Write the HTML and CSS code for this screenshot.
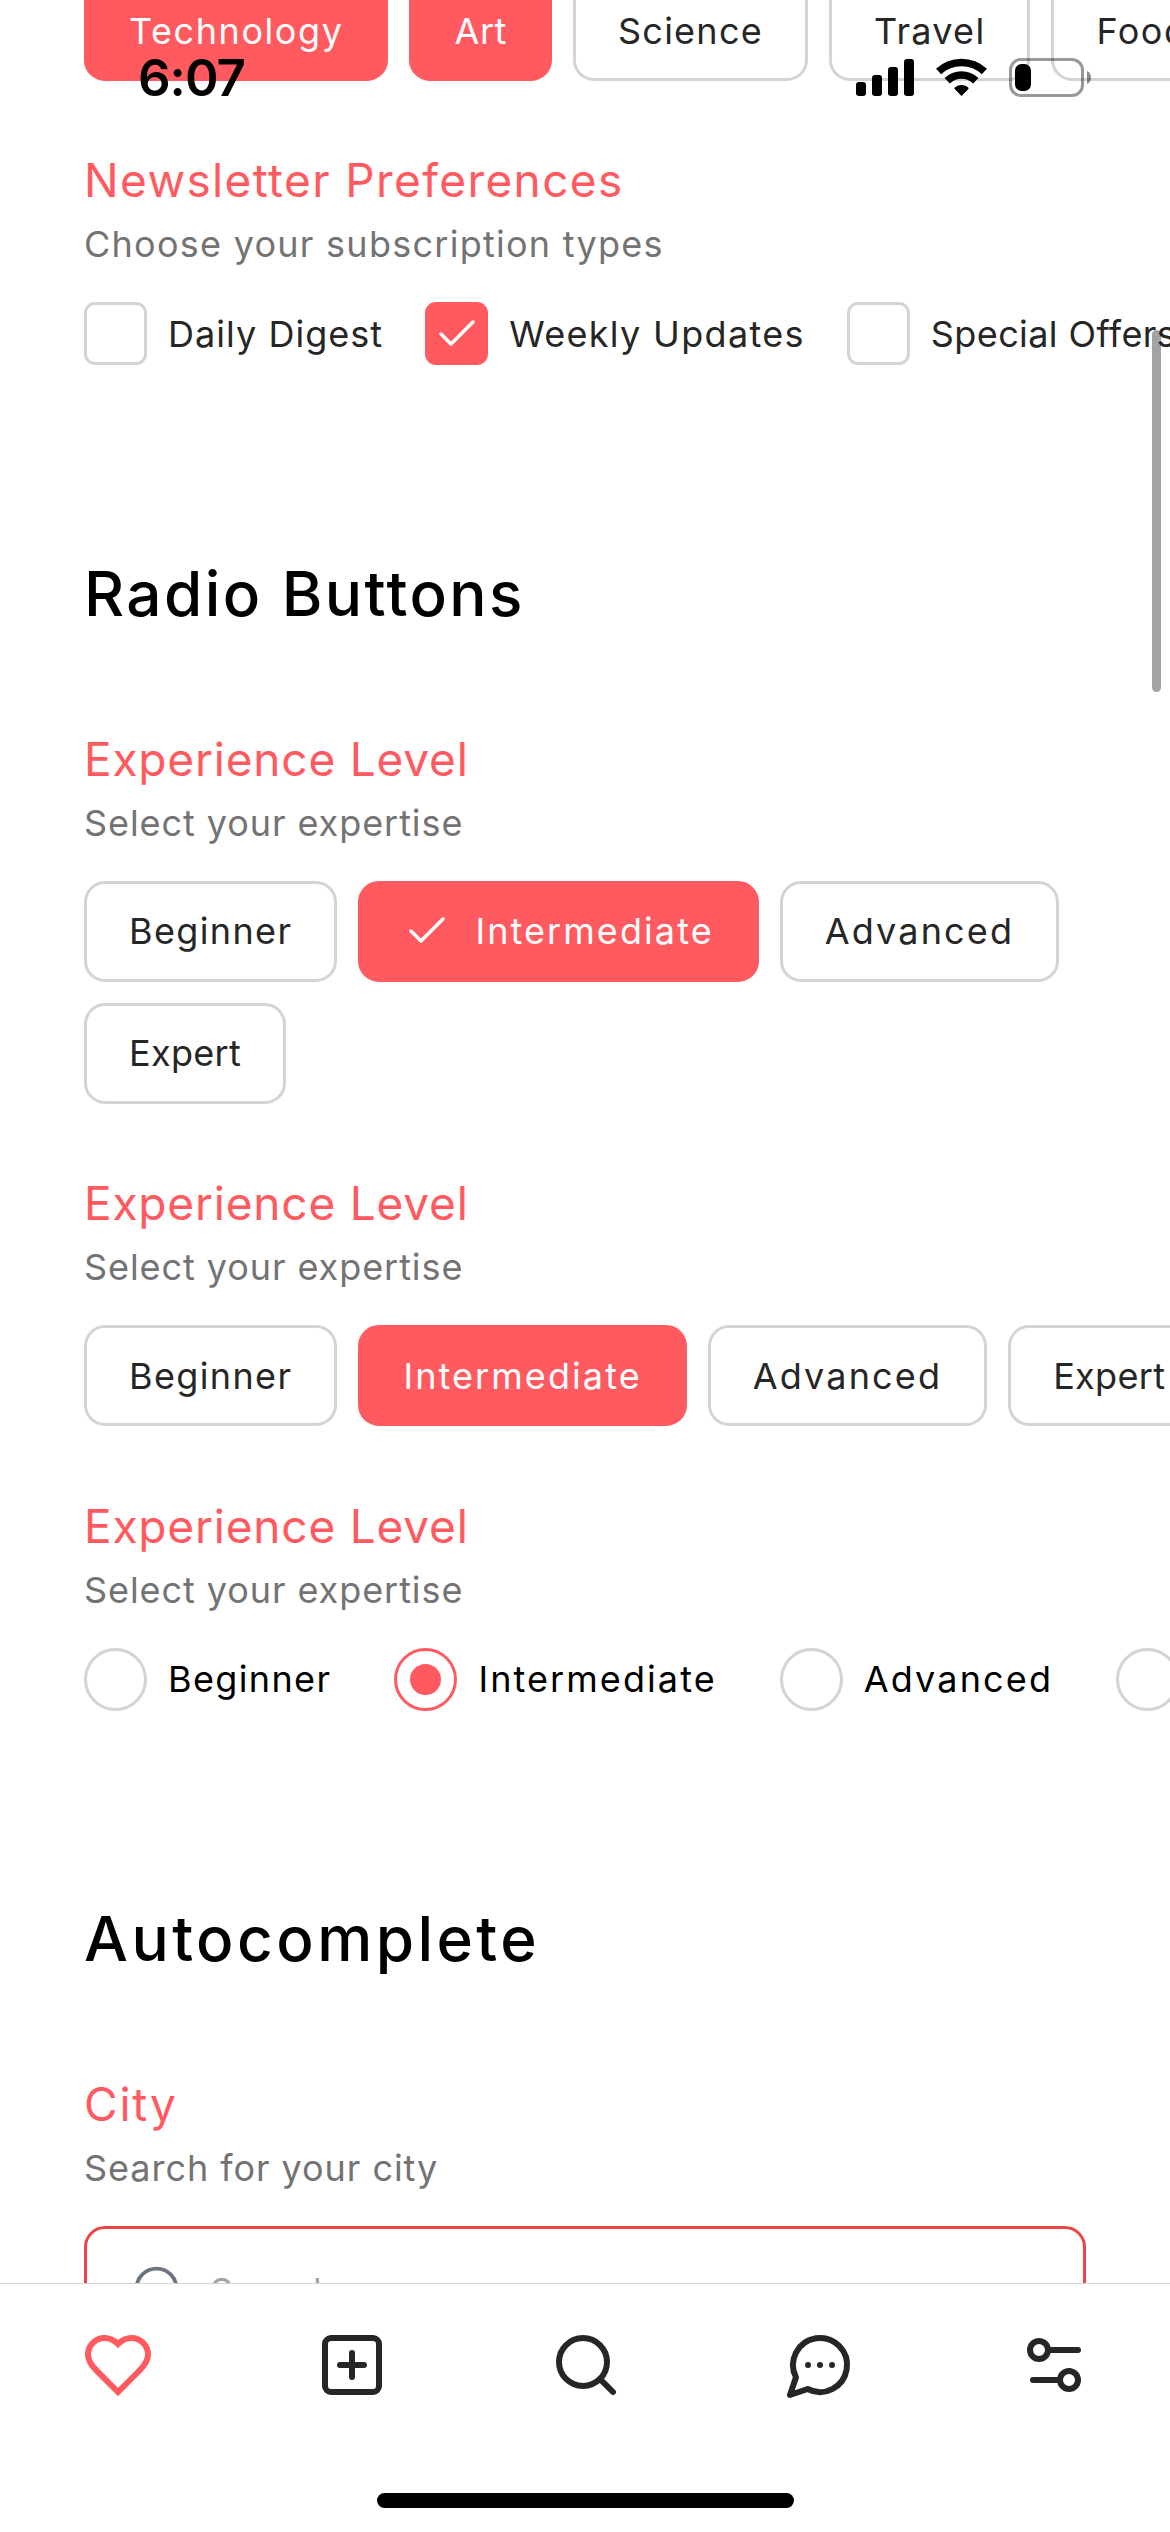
FILE: index.html
```html
<!DOCTYPE html>
<html lang="en">
<head>
<meta charset="utf-8">
<title>Form Components</title>
<link rel="stylesheet" href="styles.css">
</head>
<body>
<div class="screen">
  <main class="content">
    <div class="chips">
      <div class="chip chip-on w-technology">Technology</div>
      <div class="chip chip-on w-art">Art</div>
      <div class="chip w-science">Science</div>
      <div class="chip w-travel">Travel</div>
      <div class="chip w-food">Food</div>
    </div>

    <section class="group">
      <h3 class="title w-newsletter">Newsletter Preferences</h3>
      <p class="hint w-choose">Choose your subscription types</p>
      <div class="checks">
        <div class="check"><span class="box"></span><span class="w-daily">Daily Digest</span></div>
        <div class="check"><span class="box box-on"><svg class="tick" viewBox="0 0 24 24"><path d="M20 6 9 17l-5-5"/></svg></span><span class="w-weekly">Weekly Updates</span></div>
        <div class="check"><span class="box"></span><span class="w-special">Special Offers</span></div>
      </div>
    </section>

    <h2 class="heading w-radio">Radio Buttons</h2>

    <section class="group">
      <h3 class="title w-experience">Experience Level</h3>
      <p class="hint w-select">Select your expertise</p>
      <div class="chips chips-wrap">
        <div class="chip w-beginner">Beginner</div>
        <div class="chip chip-on w-intermediate"><svg class="tick" viewBox="0 0 24 24"><path d="M20 6 9 17l-5-5"/></svg>Intermediate</div>
        <div class="chip w-advanced">Advanced</div>
        <div class="chip w-expert">Expert</div>
      </div>
    </section>

    <section class="group group-next">
      <h3 class="title w-experience">Experience Level</h3>
      <p class="hint w-select">Select your expertise</p>
      <div class="chips">
        <div class="chip w-beginner">Beginner</div>
        <div class="chip chip-on w-intermediate">Intermediate</div>
        <div class="chip w-advanced">Advanced</div>
        <div class="chip w-expert">Expert</div>
      </div>
    </section>

    <section class="group group-next">
      <h3 class="title w-experience">Experience Level</h3>
      <p class="hint w-select">Select your expertise</p>
      <div class="radios">
        <div class="radio"><span class="ring"></span><span class="w-beginner">Beginner</span></div>
        <div class="radio"><span class="ring ring-on"></span><span class="w-intermediate">Intermediate</span></div>
        <div class="radio"><span class="ring"></span><span class="w-advanced">Advanced</span></div>
        <div class="radio"><span class="ring"></span></div>
      </div>
    </section>

    <h2 class="heading w-autocomplete">Autocomplete</h2>

    <section class="group">
      <h3 class="title w-city">City</h3>
      <p class="hint w-search">Search for your city</p>
      <div class="field">
        <svg class="field-icon" viewBox="0 0 24 24"><circle cx="11" cy="11" r="8"/><path d="m21 21-4.3-4.3"/></svg>
        <span class="w-field">Search...</span>
      </div>
    </section>
  </main>

  <nav class="tabs">
    <svg class="tab tab-on" viewBox="0 0 24 24"><path d="M19 14c1.49-1.46 3-3.21 3-5.5A5.5 5.5 0 0 0 16.5 3c-1.76 0-3 .5-4.5 2-1.5-1.5-2.74-2-4.5-2A5.5 5.5 0 0 0 2 8.500c0 2.300 1.500 4.050 3 5.500l7 7Z"/></svg>
    <svg class="tab" viewBox="0 0 24 24"><rect x="3" y="3" width="18" height="18" rx="2"/><path d="M8 12h8M12 8v8"/></svg>
    <svg class="tab" viewBox="0 0 24 24"><circle cx="11" cy="11" r="8"/><path d="m21 21-4.3-4.3"/></svg>
    <svg class="tab" viewBox="0 0 24 24"><path d="M7.9 20A9 9 0 1 0 4 16.1L2 22Z"/><path d="M8 12h.01M12 12h.01M16 12h.01"/></svg>
    <svg class="tab" viewBox="0 0 24 24"><path d="M20 7h-10M14 17H5"/><circle cx="17" cy="17" r="3"/><circle cx="7" cy="7" r="3"/></svg>
  </nav>

  <div class="status">
    <span class="clock">6:07</span>
    <svg class="status-icons" viewBox="0 0 236 40">
      <rect x="0" y="24" width="10" height="14" rx="3"/>
      <rect x="16" y="17" width="10" height="21" rx="3"/>
      <rect x="32" y="9" width="10" height="29" rx="3"/>
      <rect x="48" y="1" width="10" height="37" rx="3"/>
      <g class="wave">
        <path d="M82.6 13.6A33.5 33.5 0 0 1 128.4 13.6"/>
        <path d="M91.2 22.7A20.5 20.5 0 0 1 119.8 22.7"/>
      </g>
      <path d="M105.5 38 L98.6 31 Q98 30 99 29.3 A10.5 10.5 0 0 1 112 29.3 Q113 30 112.4 31Z"/>
      <rect class="cell" x="154.5" y="1.5" width="72" height="36" rx="10.5"/>
      <rect x="159" y="6" width="16" height="27" rx="6.5"/>
      <path class="tip" d="M231 13v13c2.500-1 4-3.500 4-6.500s-1.500-5.500-4-6.500Z"/>
    </svg>
  </div>
  <div class="scrollbar"></div>
  <div class="home-bar"></div>
</div>
</body>
</html>
```
FILE: styles.css
```css
* { box-sizing: border-box; }

body {
  margin: 0;
  background: #fff;
  font-family: "Inter", "Open Sans", sans-serif;
  color: #262626;
}

h2, h3, p { margin: 0; font-weight: 400; }

svg {
  flex: none;
  display: block;
  fill: none;
  stroke: currentColor;
  stroke-width: 2;
  stroke-linecap: round;
  stroke-linejoin: round;
}

.screen {
  position: relative;
  display: flex;
  flex-direction: column;
  width: 1170px;
  height: 2532px;
  overflow: hidden;
}

.content {
  flex: 1;
  min-height: 0;
  overflow: hidden;
  padding: 0 84px;
  font-size: 36px;
  white-space: nowrap;
}

.content > .chips { margin: -20px 0 65px; }

/* Section text */
.heading {
  margin: 183.5px 0 86px;
  font-size: 62px;
  font-weight: 500;
  line-height: 90px;
  color: #000;
}
.group-next { margin-top: 65.5px; }
.title { font-size: 46px; line-height: 68px; color: #ff5a5f; }
.hint { margin-bottom: 28px; line-height: 60px; color: #737373; }

/* Chips */
.chips { display: flex; gap: 21px; }
.chips-wrap { flex-wrap: wrap; }
.chip {
  flex: none;
  display: flex;
  align-items: center;
  gap: 24px;
  height: 101px;
  padding: 0 42px;
  border: 3px solid #d4d4d4;
  border-radius: 21px;
}
.chip-on { background: #ff5a5f; border-color: #ff5a5f; color: #fff; }
.tick { width: 48px; height: 48px; stroke-width: 1.75; }

/* Checkboxes and radios */
.checks, .radios { display: flex; }
.checks { gap: 42px; }
.radios { gap: 63px; color: #000; }
.check, .radio { flex: none; display: flex; align-items: center; gap: 21px; }
.box, .ring {
  flex: none;
  display: flex;
  align-items: center;
  justify-content: center;
  width: 63px;
  height: 63px;
  border: 3px solid #d4d4d4;
}
.box { border-radius: 11px; }
.box-on { background: #ff5a5f; border-color: #ff5a5f; color: #fff; }
.ring { border-radius: 50%; }
.ring-on { border-color: #ff5a5f; }
.ring-on::after {
  content: "";
  width: 31px;
  height: 31px;
  border-radius: 50%;
  background: #ff5a5f;
}

/* Search field */
.field {
  display: flex;
  align-items: center;
  gap: 21px;
  width: 1002px;
  height: 129px;
  padding: 0 42px;
  border: 3px solid #ef4444;
  border-radius: 21px;
  color: #9ca3af;
}
.field-icon { width: 60px; height: 60px; stroke-width: 1.5; color: #6b7280; }

/* Letter spacing by label */
.w-technology { letter-spacing: 1.57px; }
.w-art { letter-spacing: 0.6px; }
.w-science { letter-spacing: 1.25px; }
.w-travel { letter-spacing: 1.3px; }
.w-food { letter-spacing: 1.5px; }
.w-beginner { letter-spacing: 1.37px; }
.w-intermediate { letter-spacing: 2.08px; }
.w-advanced { letter-spacing: 2.15px; }
.w-expert { letter-spacing: 0.32px; }
.w-daily { letter-spacing: 1.04px; }
.w-weekly { letter-spacing: 1.32px; }
.w-special { letter-spacing: 0.4px; }
.w-choose { letter-spacing: 1.26px; }
.w-select { letter-spacing: 0.93px; }
.w-search { letter-spacing: 0.95px; }
.w-field { letter-spacing: 0.95px; }
.w-newsletter { letter-spacing: 1.38px; }
.w-experience { letter-spacing: 0.8px; }
.w-city { letter-spacing: 1.8px; }
.w-radio { letter-spacing: 2.45px; }
.w-autocomplete { letter-spacing: 3.45px; }

/* Bottom navigation */
.tabs {
  flex: none;
  display: flex;
  justify-content: space-between;
  height: 249px;
  padding: 45px 80px 0 82px;
  border-top: 1px solid #d4d4d4;
  background: #fff;
}
.tab { width: 72px; height: 72px; }
.tab-on { color: #ff5a5f; stroke-linejoin: miter; }

/* System overlays */
.status {
  position: absolute;
  top: 58px;
  left: 0;
  right: 0;
  display: flex;
  justify-content: space-between;
  align-items: center;
  height: 40px;
  padding: 0 78px 0 138px;
  color: #000;
}
.clock { font-size: 51px; font-weight: 600; line-height: 40px; letter-spacing: -1px; }
.status-icons { width: 236px; height: 40px; fill: #000; stroke: none; }
.wave { fill: none; stroke: #000; stroke-width: 7.5; stroke-linecap: butt; }
.cell { fill: none; stroke: rgba(0, 0, 0, 0.4); stroke-width: 3; }
.tip { fill: rgba(0, 0, 0, 0.45); }

.scrollbar {
  position: absolute;
  top: 330px;
  right: 9px;
  width: 9px;
  height: 362px;
  border-radius: 5px;
  background: rgba(0, 0, 0, 0.36);
}
.home-bar {
  position: absolute;
  bottom: 24px;
  left: 377px;
  width: 417px;
  height: 15px;
  border-radius: 8px;
  background: #000;
}
```
